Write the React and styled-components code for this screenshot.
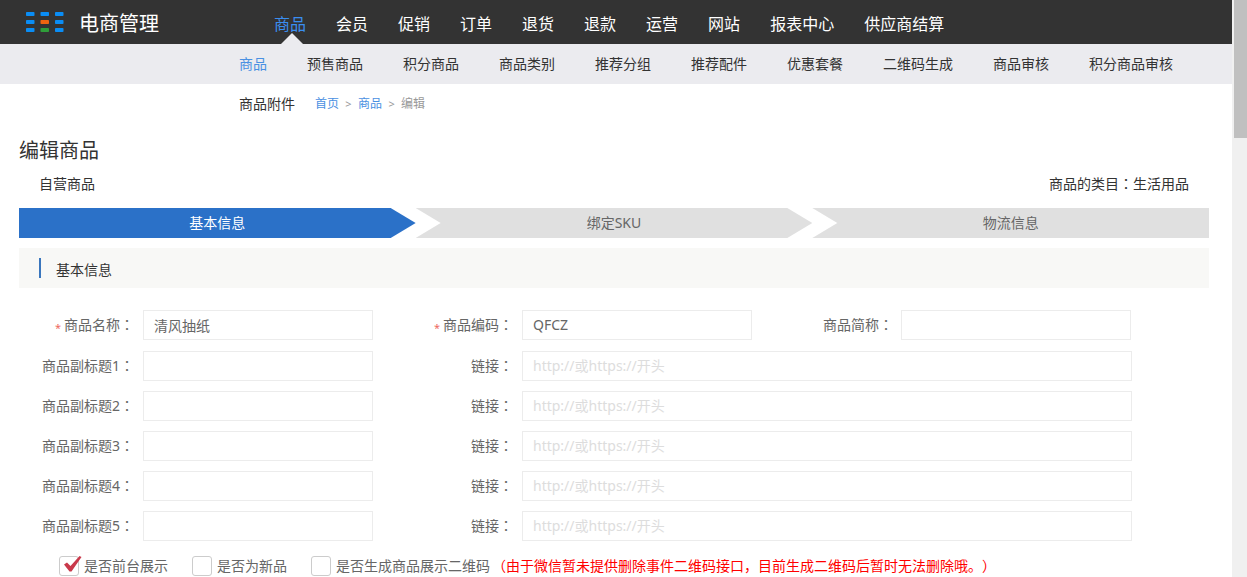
import React from "react";
import styled, { createGlobalStyle } from "styled-components";

const Global = createGlobalStyle`
  html, body { margin: 0; padding: 0; background: #fff; }
  body {
    font-family: "Noto Sans", "Noto Sans CJK SC", sans-serif;
    color: #333;
    text-spacing-trim: space-all;
  }
  * { box-sizing: border-box; }
`;

const Shell = styled.div`
  display: flex;
  height: 100vh;
  overflow: hidden;
`;

const Page = styled.div`
  flex: 1;
  min-width: 0;
  overflow: hidden;
`;

const ScrollTrack = styled.div`
  flex: none;
  width: 15px;
  padding-left: 2px;
  background: #f0f0f0;
`;

const ScrollThumb = styled.div`
  height: 138px;
  background: #c0c0c0;
`;

const Header = styled.header`
  display: flex;
  align-items: center;
  height: 44px;
  background: #333;
  padding-left: 26px;
`;

const Brand = styled.div`
  display: flex;
  align-items: center;
  gap: 15px;
  width: 248px;
  color: #fff;
  font-size: 20px;
`;

const Nav = styled.nav`
  display: flex;
  gap: 30px;
  height: 100%;
  align-items: center;
`;

const NavItem = styled.a`
  position: relative;
  height: 44px;
  padding-top: 2px;
  font-size: 16px;
  line-height: 44px;
  color: ${(p) => (p.$active ? "#3a8ef0" : "#fff")};

  &::after {
    content: ${(p) => (p.$active ? '""' : "none")};
    position: absolute;
    left: 7px;
    bottom: 0;
    border-left: 11px solid transparent;
    border-right: 11px solid transparent;
    border-bottom: 11px solid #ebebef;
  }
`;

const SubNav = styled.div`
  display: flex;
  align-items: center;
  gap: 40px;
  height: 40px;
  padding-left: 239px;
  background: #ebebef;
`;

const SubItem = styled.a`
  font-size: 14px;
  line-height: 40px;
  color: ${(p) => (p.$active ? "#4a90e2" : "#333")};
`;

const CrumbRow = styled.div`
  display: flex;
  align-items: center;
  height: 40px;
  padding-left: 239px;
  font-size: 14px;
  line-height: 40px;
`;

const Crumbs = styled.div`
  display: flex;
  align-items: center;
  margin-left: 20px;
  font-size: 12px;
  color: #999;
`;

const CrumbLink = styled.a`
  color: #4a90e2;
`;

const CrumbSep = styled.span`
  width: 19px;
  text-align: center;
  font-size: 11px;
`;

const Main = styled.main`
  padding: 13px 23px 0 19px;
`;

const Title = styled.h1`
  margin: 0;
  font-size: 20px;
  font-weight: 400;
  line-height: 28px;
  color: #333;
`;

const Meta = styled.div`
  display: flex;
  justify-content: space-between;
  align-items: center;
  height: 20px;
  margin-top: 9px;
  padding: 0 20px;
  font-size: 14px;
  line-height: 20px;
`;

const Colon = styled.span`
  font-family: "Noto Sans CJK TC", sans-serif;
  line-height: 0;
`;

const Steps = styled.div`
  display: grid;
  grid-template-columns: repeat(3, 1fr);
  margin-top: 14px;
`;

const clips = {
  first: "polygon(0 0, calc(100% - 25px) 0, 100% 50%, calc(100% - 25px) 100%, 0 100%)",
  middle: "polygon(0 0, calc(100% - 25px) 0, 100% 50%, calc(100% - 25px) 100%, 0 100%, 25px 50%)",
  last: "polygon(0 0, 100% 0, 100% 100%, 0 100%, 25px 50%)",
};

const Step = styled.div`
  height: 30px;
  line-height: 30px;
  text-align: center;
  font-size: 14px;
  background: ${(p) => (p.$active ? "#2b71c8" : "#e0e0e0")};
  color: ${(p) => (p.$active ? "#fff" : "#666")};
  clip-path: ${(p) => clips[p.$shape]};
`;

const Section = styled.div`
  display: flex;
  align-items: center;
  height: 40px;
  margin-top: 10px;
  padding-left: 20px;
  background: #f8f8f6;

  &::before {
    content: "";
    width: 2px;
    height: 20px;
    margin-right: 15px;
    background: #3a76bd;
  }
`;

const SectionTitle = styled.span`
  padding-top: 3px;
  font-size: 14px;
  line-height: 20px;
`;

const Form = styled.form`
  padding-top: 22px;
`;

const Row = styled.div`
  display: flex;
  align-items: center;
  height: 30px;
  margin-bottom: ${(p) => (p.$first ? "11px" : "10px")};
`;

const Label = styled.label`
  flex: none;
  width: ${(p) => p.$w}px;
  height: 30px;
  padding-right: ${(p) => p.$pad ?? 9}px;
  text-align: right;
  font-size: 14px;
  line-height: 30px;
  color: #666;
  white-space: nowrap;
`;

const Star = styled.span`
  margin-right: 3px;
  color: #ee6a5f;
  font-size: 11px;
  vertical-align: -2px;
  line-height: 0;
`;

const Input = styled.input`
  flex: none;
  width: ${(p) => p.$w}px;
  height: 30px;
  padding: 0 11px 1px 10px;
  border: 1px solid #ececec;
  outline: none;
  background: #fff;
  font: inherit;
  font-size: 14px;
  color: #666;

  &::placeholder {
    color: #ddd;
    opacity: 1;
  }
`;

const Checks = styled.div`
  display: flex;
  align-items: center;
  margin-top: 15px;
  padding-left: 40px;
  font-size: 14px;
  line-height: 20px;
  color: #666;
`;

const CheckItem = styled.span`
  display: flex;
  align-items: center;
  margin-right: ${(p) => p.$mr}px;
`;

const Box = styled.span`
  position: relative;
  width: 20px;
  height: 20px;
  margin-right: 5px;
  border: 1px solid #ccc;
  border-radius: 3px;
  background: #fff;
`;

const Tick = styled.svg`
  position: absolute;
  left: 4px;
  top: -1px;
  overflow: visible;
`;

const Notice = styled.span`
  margin-left: 2px;
  color: #f00;
  white-space: nowrap;
`;

const nav = ["商品", "会员", "促销", "订单", "退货", "退款", "运营", "网站", "报表中心", "供应商结算"];
const sub = ["商品", "预售商品", "积分商品", "商品类别", "推荐分组", "推荐配件", "优惠套餐", "二维码生成", "商品审核", "积分商品审核"];
const linkPlaceholder = "http://或https://开头";

const Logo = () => (
  <svg width="38" height="20" viewBox="0 0 38 20" aria-hidden="true">
    {[0, 14.5, 29].map((x, c) =>
      [0, 8, 16].map((y, r) => (
        <rect
          key={`${c}-${r}`}
          x={x}
          y={y}
          width="8.5"
          height="4"
          rx="0.8"
          fill={c === 1 && r === 1 ? "#ee6410" : c === 1 && r === 2 ? "#2f9e3a" : "#0a8df5"}
        />
      ))
    )}
  </svg>
);

export default function App() {
  return (
    <Shell>
      <Global />
      <Page>
        <Header>
          <Brand>
            <Logo />
            电商管理
          </Brand>
          <Nav>
            {nav.map((n, i) => (
              <NavItem key={n} $active={i === 0}>{n}</NavItem>
            ))}
          </Nav>
        </Header>
        <SubNav>
          {sub.map((n, i) => (
            <SubItem key={n} $active={i === 0}>{n}</SubItem>
          ))}
        </SubNav>
        <CrumbRow>
          商品附件
          <Crumbs>
            <CrumbLink>首页</CrumbLink>
            <CrumbSep>&gt;</CrumbSep>
            <CrumbLink>商品</CrumbLink>
            <CrumbSep>&gt;</CrumbSep>
            编辑
          </Crumbs>
        </CrumbRow>
        <Main>
          <Title>编辑商品</Title>
          <Meta>
            <span>自营商品</span>
            <span>商品的类目<Colon>：</Colon>生活用品</span>
          </Meta>
          <Steps>
            <Step $active $shape="first">基本信息</Step>
            <Step $shape="middle">绑定SKU</Step>
            <Step $shape="last">物流信息</Step>
          </Steps>
          <Section>
            <SectionTitle>基本信息</SectionTitle>
          </Section>
          <Form>
            <Row $first>
              <Label $w={124}><Star>*</Star>商品名称<Colon>：</Colon></Label>
              <Input $w={230} defaultValue="清风抽纸" />
              <Label $w={149}><Star>*</Star>商品编码<Colon>：</Colon></Label>
              <Input $w={230} defaultValue="QFCZ" />
              <Label $w={149} $pad={8}>商品简称<Colon>：</Colon></Label>
              <Input $w={230} />
            </Row>
            {[1, 2, 3, 4, 5].map((n) => (
              <Row key={n}>
                <Label $w={124}>商品副标题{n}<Colon>：</Colon></Label>
                <Input $w={230} />
                <Label $w={149}>链接<Colon>：</Colon></Label>
                <Input $w={610} placeholder={linkPlaceholder} />
              </Row>
            ))}
            <Checks>
              <CheckItem $mr={24}>
                <Box>
                  <Tick width="18" height="16" viewBox="0 0 18 16" aria-hidden="true">
                    <path d="M0 8.5 L3 6.5 L6.5 10 L15.5 0 L17.5 1 L7.5 15.5 L5.5 15.5 Z" fill="#c9394b" />
                  </Tick>
                </Box>
                是否前台展示
              </CheckItem>
              <CheckItem $mr={24}>
                <Box />
                是否为新品
              </CheckItem>
              <CheckItem $mr={0}>
                <Box />
                是否生成商品展示二维码
              </CheckItem>
              <Notice>（由于微信暂未提供删除事件二维码接口，目前生成二维码后暂时无法删除哦。）</Notice>
            </Checks>
          </Form>
        </Main>
      </Page>
      <ScrollTrack>
        <ScrollThumb />
      </ScrollTrack>
    </Shell>
  );
}
